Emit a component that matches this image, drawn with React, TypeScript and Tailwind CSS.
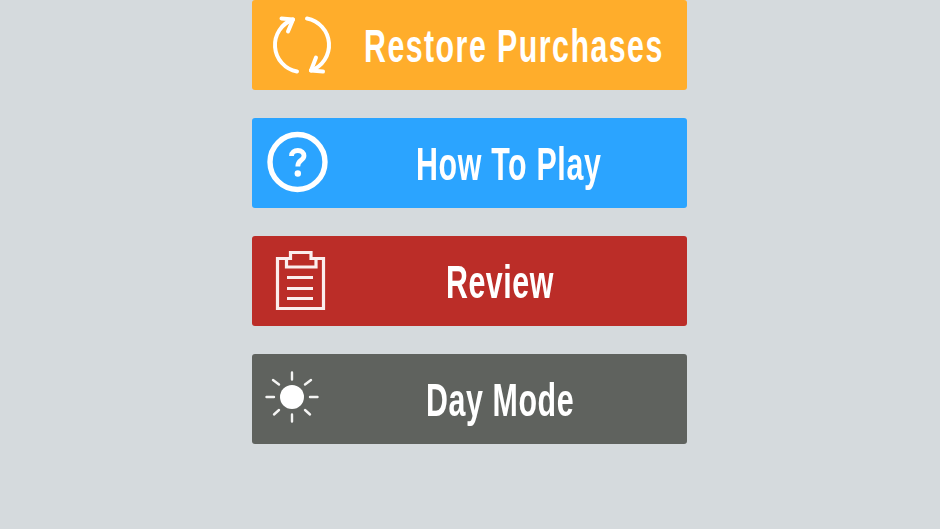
const RefreshIcon = () => (
  <svg width="64" height="64" viewBox="0 0 64 64" fill="none" stroke="white" strokeWidth="4" strokeLinecap="round" strokeLinejoin="round">
    <path d="M27 58.5 A27 27 0 0 1 23 6.5" />
    <path d="M37 5.5 A27 27 0 0 1 41 57.5" />
    <path d="M11.5 5.5 L23 6.5 L18 18.5" />
    <path d="M53 58.5 L41 57.5 L46 44.5" />
  </svg>
);

const QuestionIcon = () => (
  <svg width="64" height="64" viewBox="0 0 64 64" fill="none">
    <circle cx="31.5" cy="31" r="27.5" stroke="white" strokeWidth="5.4" />
    <path d="M25.5 25 C25.5 21.2 28.2 19.5 31.8 19.5 C35.6 19.5 38 21.6 38 24.8 C38 27.2 36.6 28.2 34.8 29.5 C32.8 30.9 31.8 32 31.8 35.5" stroke="white" strokeWidth="4.8" strokeLinecap="butt" />
    <circle cx="31.8" cy="42.5" r="3.2" fill="white" />
  </svg>
);

const ClipboardIcon = () => (
  <svg width="52" height="62" viewBox="0 0 52 62" fill="none" stroke="#fbeeee" strokeWidth="3.2">
    <path d="M11.5 8.5 H2.5 V58.5 H48.5 V8.5 H41" />
    <path d="M15.5 8.5 V2.5 H36 V8.5 H41 V17 H11.5 V8.5 Z" />
    <path d="M12 27.5 H38 M12 38.5 H38 M12 48.5 H38" />
  </svg>
);

const SunIcon = () => (
  <svg width="56" height="56" viewBox="0 0 56 56" fill="none" stroke="#f4f4f3" strokeWidth="2.4" strokeLinecap="round">
    <circle cx="28" cy="28" r="12" fill="white" stroke="none" />
    <path d="M28 3.5 V10.5 M28 45.5 V52.5 M2.5 28 H10 M46 28 H53.5 M9 11 L15 15.5 M47 11 L41 15.5 M10 45.5 L15 41 M46 45.5 L41 41" />
  </svg>
);

const items = [
  { label: 'Restore Purchases', bg: 'bg-[#ffad2b]', icon: <RefreshIcon />, iconBox: 'ml-[18px]', text: 'ml-[30px] tracking-[2.2px]' },
  { label: 'How To Play', bg: 'bg-[#2ba4ff]', icon: <QuestionIcon />, iconBox: 'ml-[14px]', text: 'ml-[86px] tracking-[1px]' },
  { label: 'Review', bg: 'bg-[#bb2d28]', icon: <ClipboardIcon />, iconBox: 'ml-[23px]', text: 'ml-[119px] tracking-[0.8px]' },
  { label: 'Day Mode', bg: 'bg-[#5f625e]', icon: <SunIcon />, iconBox: 'ml-[12px] -mt-1', text: 'ml-[106px] tracking-[0.9px]' },
];

export default function App() {
  return (
    <div className="min-h-[529px] h-screen w-full bg-[#d5dadd] flex flex-col items-center overflow-hidden pr-px font-['Liberation_Sans',sans-serif]">
      <div className="w-[435px] flex flex-col gap-[28px] blur-[0.6px]">
        {items.map((item) => (
          <div key={item.label} className={`h-[90px] rounded-[3px] flex items-center text-white ${item.bg}`}>
            <div className={`shrink-0 flex items-center ${item.iconBox}`}>{item.icon}</div>
            <span className={`whitespace-nowrap text-[46px] leading-none font-bold origin-left scale-x-[0.66] mt-0.5 ${item.text}`}>
              {item.label}
            </span>
          </div>
        ))}
      </div>
    </div>
  );
}
